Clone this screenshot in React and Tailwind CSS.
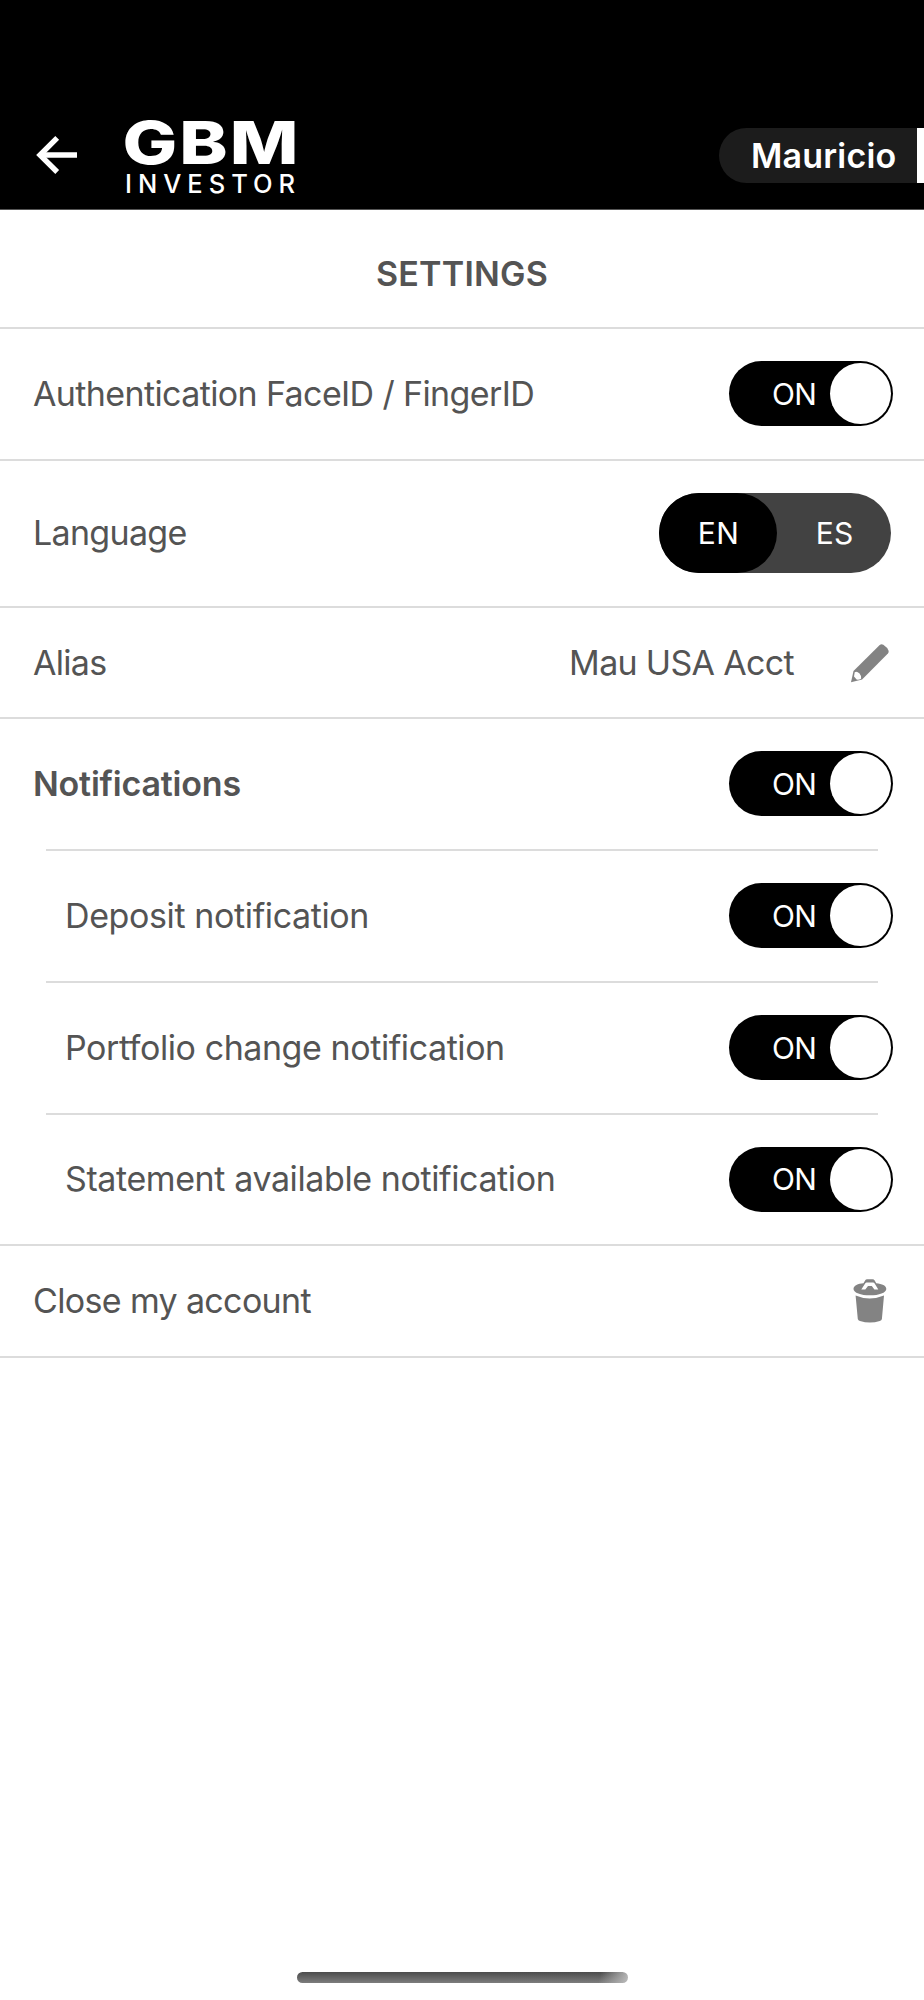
import React from "react";

function BackArrow() {
  return (
    <svg className="h-10 w-[42px]" viewBox="0 0 42 40" fill="none" stroke="#fff" strokeWidth="5.4">
      <path d="M5 20H42" />
      <path d="M22.2 2.8L5 20L22.2 37" />
    </svg>
  );
}

function Logo() {
  return (
    <svg className="h-[92px] w-[190px]" viewBox="-4 -8 190 92" fill="#fff" fontFamily="Inter, sans-serif">
      <text transform="translate(-0.5 49) scale(1.225 1)" fontSize="59.5" fontWeight="800" letterSpacing="1.6">
        GBM
      </text>
      <text x="2" y="77.5" fontSize="25.5" fontWeight="500" letterSpacing="6">
        INVESTOR
      </text>
    </svg>
  );
}

function Toggle() {
  return (
    <button className="flex h-[65px] w-[164px] items-center justify-between rounded-full bg-black p-0.5 pl-[43px]">
      <span className="text-[30px] leading-none tracking-[-0.8px] text-white">ON</span>
      <span className="size-[61px] rounded-full bg-white" />
    </button>
  );
}

function LanguageSwitch() {
  return (
    <div className="mr-0.5 flex h-20 w-[232px] rounded-full bg-[#424242] text-[30px] leading-none text-white">
      <span className="flex w-[118px] items-center justify-center rounded-full bg-black pl-px tracking-[0.4px]">EN</span>
      <span className="flex flex-1 items-center justify-center pl-px">ES</span>
    </div>
  );
}

function Pencil() {
  return (
    <svg className="h-[40px] w-[40px]" viewBox="0 0 40 40" fill="#838383">
      <path d="M1 39.2L3.5 27.9L29.7 2Q31.3 .5 33.3 1.7Q37.3 4.200 38.6 7.700Q39 9.200 37.900 10.400L12.100 36.500Z" />
      <path d="M4.700 29.200Q7 27.900 9.500 30.600Q11.700 33 11.100 35.800Q8.800 37 6.600 36.600L4 33.500Z" fill="#fff" />
    </svg>
  );
}

function Trash() {
  return (
    <svg className="h-[44px] w-[34px]" viewBox="0 0 34 44" fill="#838383">
      <path d="M2.600 16.500Q16.500 22.500 31 16.500L28.900 40Q28.600 41.300 26.800 42Q17 45 7 42Q5.100 41.300 4.800 40Z" />
      <path d="M.5 9.900C.5 6.500 5 4.500 10.500 4.200L12.100 1.400Q12.800 .3 14.200 .3H19.500Q21 .3 21.700 1.400L23.200 4.200C29 4.700 33.300 6.600 33.300 9.900C33.300 13.600 26 16.300 17 16.300S.5 13.600 .5 9.900Z" />
      <path d="M8.300 10.400L12.300 4.300Q12.800 3.600 13.700 3.600H20.100Q21 3.600 21.500 4.300L25.300 10.400H21.400L18.800 6.900H15L12.300 10.400Z" fill="#fff" />
    </svg>
  );
}

function Row({ className, children }) {
  return (
    <div className={`flex items-center justify-between border-b-2 border-[#dcdcdc] ${className}`}>{children}</div>
  );
}

export default function App() {
  return (
    <div className="flex h-[2000px] w-[924px] flex-col overflow-hidden bg-white font-[Inter,sans-serif] text-[34px] leading-none text-[#545454]">
      <header className="flex h-[210px] shrink-0 items-start justify-between border-b border-[#555] bg-black pt-[107px]">
        <div className="flex items-start">
          <div className="pt-[28px] pl-[35px]">
            <BackArrow />
          </div>
          <div className="pl-[42px]">
            <Logo />
          </div>
        </div>
        <div className="mt-[21px] flex h-[55px] items-stretch">
          <div className="flex w-[198px] items-center rounded-l-full bg-[#1c1c1c] pl-[32px] font-semibold tracking-[0.2px] text-white">
            Mauricio
          </div>
          <div className="w-[7px] bg-white" />
        </div>
      </header>

      <main>
        <h1 className="flex h-[119px] items-center justify-center border-b-2 border-[#dcdcdc] pt-[10px] font-semibold tracking-[0.2px]">
          SETTINGS
        </h1>
        <Row className="h-[132px] pr-[31px] pb-px pl-[33px]">
          <span className="tracking-[-0.62px]">Authentication FaceID / FingerID</span>
          <Toggle />
        </Row>
        <Row className="h-[147px] pr-[31px] pb-px pl-[33px]">
          <span className="tracking-[-0.69px]">Language</span>
          <LanguageSwitch />
        </Row>
        <Row className="h-[111px] pr-[34px] pl-[33px]">
          <span className="tracking-[-0.7px]">Alias</span>
          <span className="flex items-center gap-[56px]">
            <span className="tracking-[-0.68px]">Mau USA Acct</span>
            <Pencil />
          </span>
        </Row>
        <section className="border-b-2 border-[#dcdcdc]">
          <div className="flex h-[130px] items-center justify-between pr-[31px] pb-px pl-[33px]">
            <span className="font-semibold tracking-[-0.2px]">Notifications</span>
            <Toggle />
          </div>
          <div className="mx-[46px] flex h-[132px] items-center justify-between border-t-2 border-[#dcdcdc] pb-px pl-[19px]">
            <span className="tracking-[-0.385px]">Deposit notification</span>
            <span className="-mr-[15px]"><Toggle /></span>
          </div>
          <div className="mx-[46px] flex h-[132px] items-center justify-between border-t-2 border-[#dcdcdc] pb-px pl-[19px]">
            <span className="tracking-[-0.43px]">Portfolio change notification</span>
            <span className="-mr-[15px]"><Toggle /></span>
          </div>
          <div className="mx-[46px] flex h-[131px] items-center justify-between border-t-2 border-[#dcdcdc] pb-px pl-[19px]">
            <span className="tracking-[-0.4px]">Statement available notification</span>
            <span className="-mr-[15px]"><Toggle /></span>
          </div>
        </section>
        <Row className="h-[112px] pr-[37px] pl-[33px]">
          <span className="tracking-[-0.65px]">Close my account</span>
          <Trash />
        </Row>
      </main>

      <div className="mx-auto mt-auto mb-[17px] h-[11px] w-[331px] rounded-full bg-[linear-gradient(105deg,transparent_91%,#bbbbbb_100%),linear-gradient(to_bottom,#4b4b4b,#7d7d7d)]" />
    </div>
  );
}
